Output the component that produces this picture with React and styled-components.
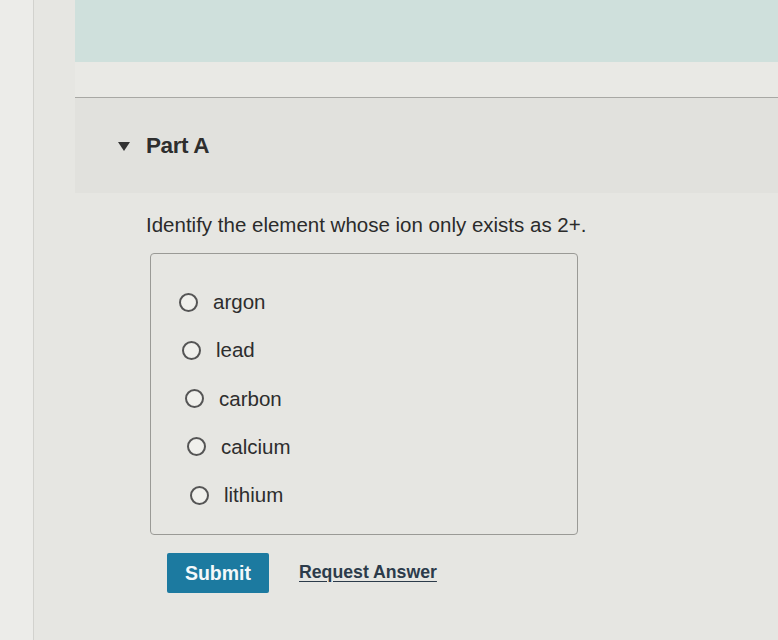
import React from "react";
import styled, { createGlobalStyle } from "styled-components";

const Global = createGlobalStyle`
  html, body { margin: 0; padding: 0; }
  body {
    background: #e6e6e2;
    font-family: "Liberation Sans", Arial, sans-serif;
    color: #2b2b2b;
  }
`;

const Page = styled.div`
  display: flex;
  min-height: 640px;
  width: 778px;
  overflow: hidden;
`;

const LeftRail = styled.div`
  width: 33px;
  flex: none;
  background: #ecece9;
  border-right: 1px solid #d2d2ce;
`;

const Main = styled.div`
  flex: 1;
  display: flex;
  flex-direction: column;
  padding-left: 41px;
`;

const Banner = styled.div`
  height: 62px;
  background: #cfe0dc;
`;

const Gap = styled.div`
  height: ${(p) => p.$h}px;
  background: ${(p) => p.$bg || "transparent"};
`;

const Divider = styled.div`
  height: 1px;
  background: #a8a8a4;
`;

const PartHeader = styled.div`
  height: 95px;
  background: #e1e1dd;
  display: flex;
  align-items: center;
  padding-left: 43px;
  gap: 16px;
`;

const Caret = styled.svg`
  width: 12px;
  height: 9px;
  margin-top: 2px;
`;

const PartTitle = styled.h2`
  margin: 0;
  font-size: 22.5px;
  font-weight: bold;
  color: #2e2e2e;
  letter-spacing: -0.4px;
`;

const Content = styled.div`
  padding: 19px 0 0 71px;
  display: flex;
  flex-direction: column;
`;

const Question = styled.p`
  margin: 0;
  font-size: 20.5px;
  line-height: 26px;
  color: #2b2b2b;
`;

const OptionsBox = styled.div`
  margin: 15px 0 0 4px;
  width: 428px;
  height: 282px;
  box-sizing: border-box;
  border: 1px solid #9a9a96;
  border-radius: 4px;
  padding: 36px 0 0 28px;
  display: flex;
  flex-direction: column;
  gap: 24.3px;
`;

const Option = styled.label`
  display: flex;
  align-items: center;
  gap: 15px;
  height: 24px;
  padding-left: ${(p) => p.$shift}px;
  font-size: 20.5px;
  color: #2d2d2d;
`;

const Radio = styled.span`
  width: 15px;
  height: 15px;
  border: 2px solid #555;
  border-radius: 50%;
  background: #f0f0ec;
  flex: none;
`;

const Actions = styled.div`
  display: flex;
  align-items: center;
  gap: 30px;
  margin: 18px 0 0 21px;
`;

const SubmitButton = styled.button`
  width: 102px;
  height: 40px;
  background: #1c7aa0;
  color: #f4f8fa;
  border: none;
  border-radius: 2px;
  font-family: inherit;
  font-size: 19.5px;
  font-weight: bold;
  padding: 0;
`;

const LinkText = styled.a`
  font-size: 17.7px;
  font-weight: bold;
  color: #2c3b4a;
  text-decoration: underline;
  text-underline-offset: 3px;
  margin-top: -2px;
`;

const options = [
  { label: "argon", shift: 0 },
  { label: "lead", shift: 3 },
  { label: "carbon", shift: 6 },
  { label: "calcium", shift: 8 },
  { label: "lithium", shift: 11 },
];

export default function App() {
  return (
    <>
      <Global />
      <Page>
        <LeftRail />
        <Main>
          <Banner />
          <Gap $h={35} $bg="#e9e9e5" />
          <Divider />
          <PartHeader>
            <Caret viewBox="0 0 12 9">
              <path d="M0 0 L12 0 L6 9 Z" fill="#333" />
            </Caret>
            <PartTitle>Part A</PartTitle>
          </PartHeader>
          <Content>
            <Question>Identify the element whose ion only exists as 2+.</Question>
            <OptionsBox>
              {options.map((o) => (
                <Option key={o.label} $shift={o.shift}>
                  <Radio />
                  {o.label}
                </Option>
              ))}
            </OptionsBox>
            <Actions>
              <SubmitButton>Submit</SubmitButton>
              <LinkText>Request Answer</LinkText>
            </Actions>
          </Content>
        </Main>
      </Page>
    </>
  );
}
